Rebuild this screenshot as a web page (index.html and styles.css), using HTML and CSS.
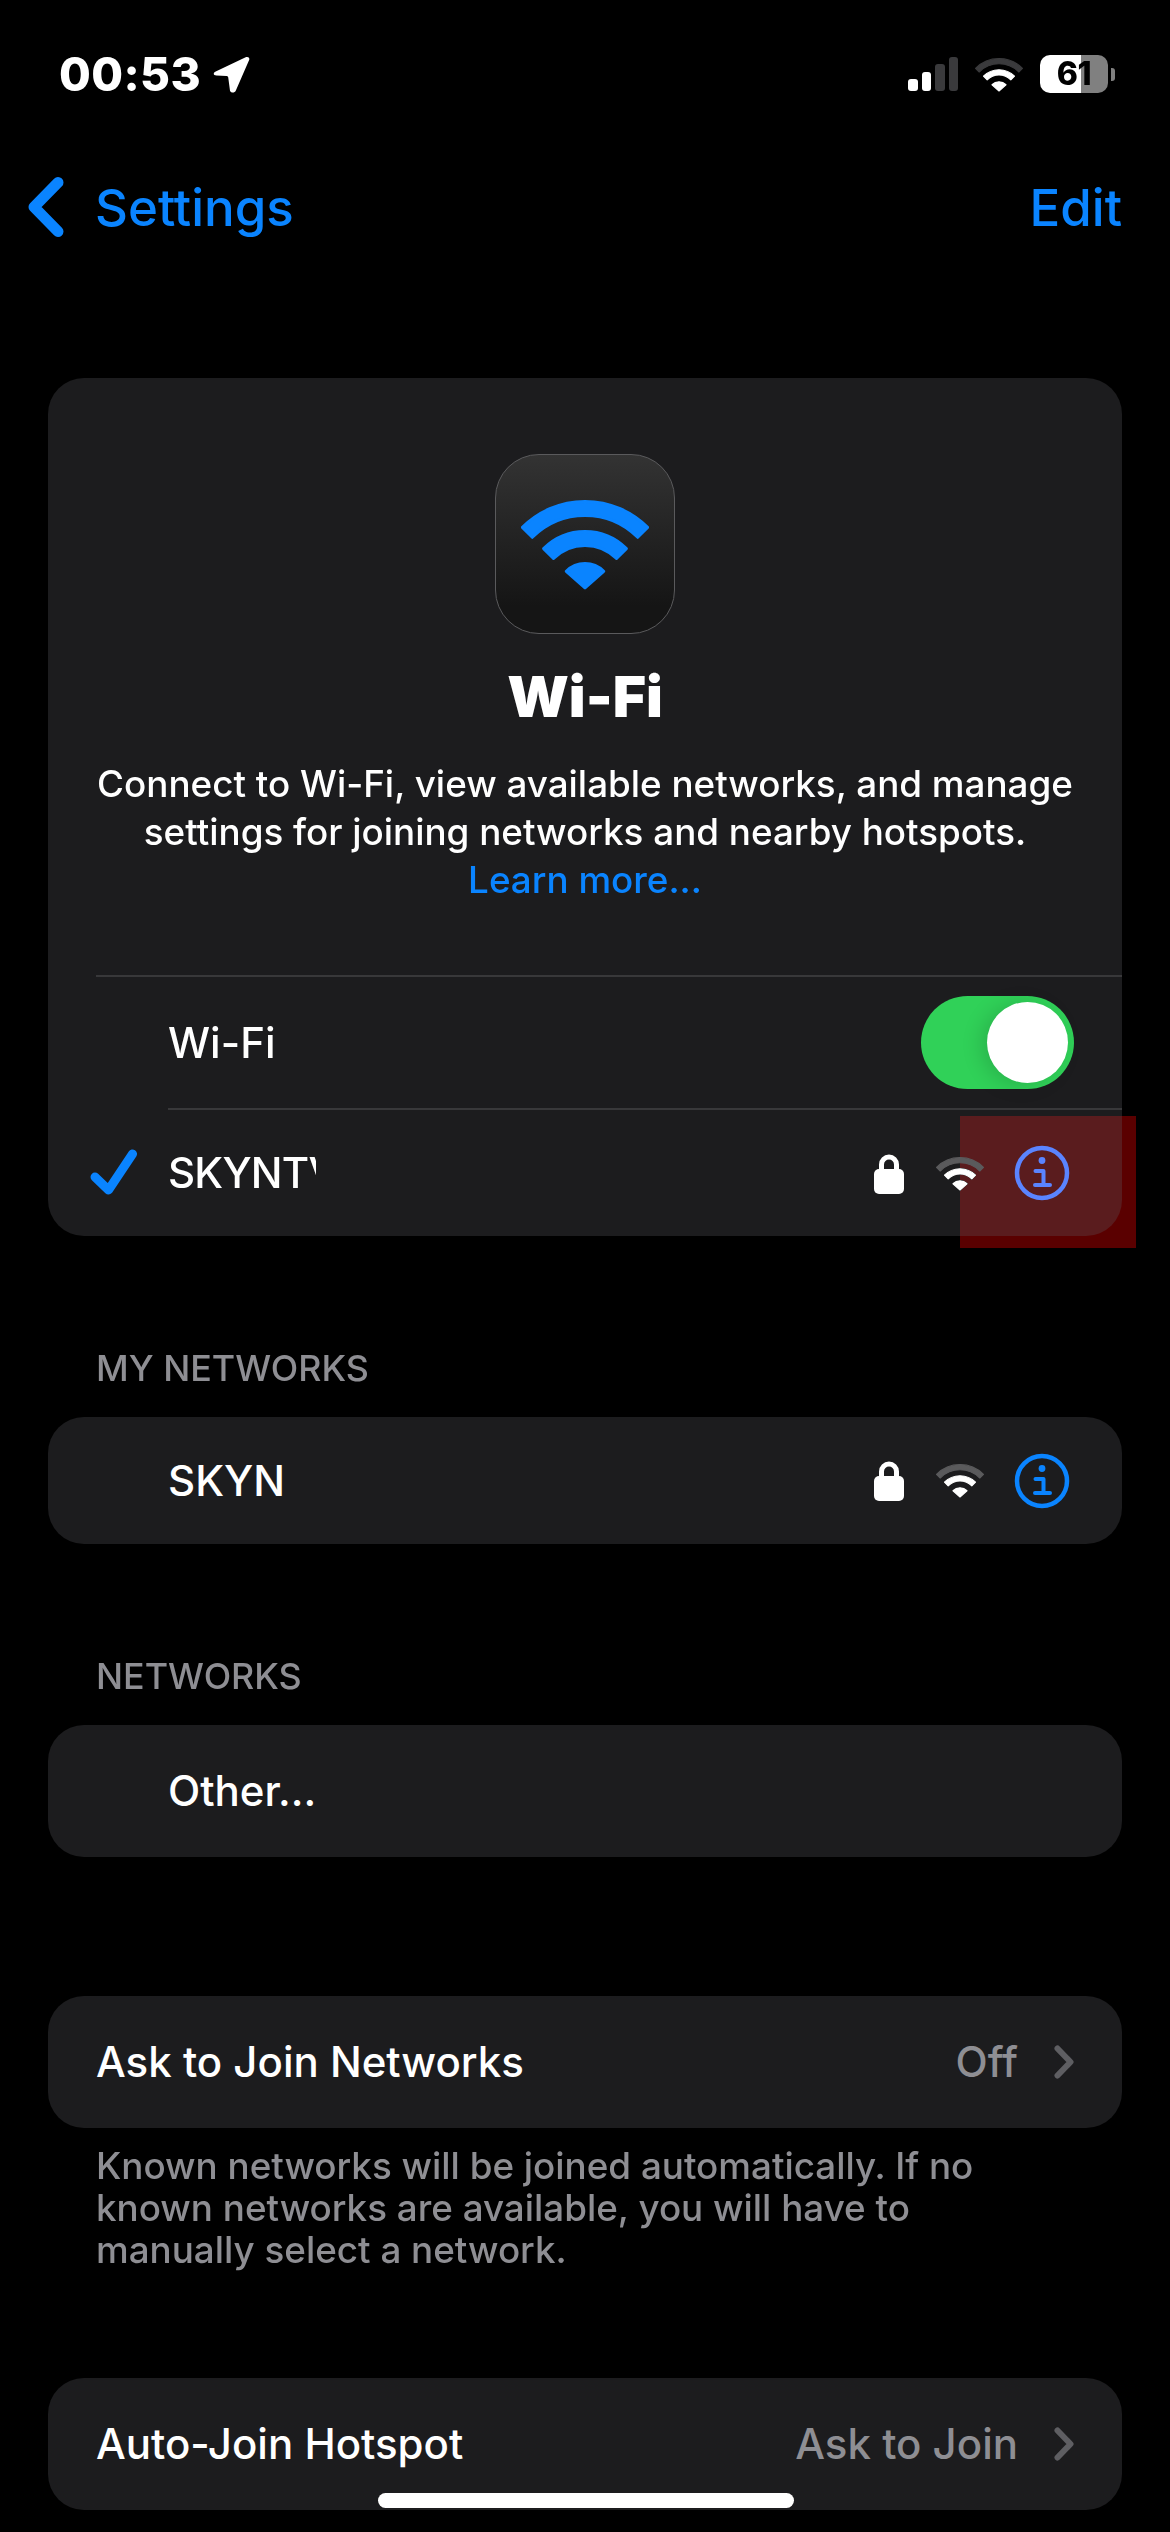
FILE: index.html
```html
<!DOCTYPE html>
<html lang="en">
<head>
<meta charset="utf-8">
<title>Wi-Fi</title>
<link rel="stylesheet" href="styles.css">
</head>
<body>
<svg class="defs" width="0" height="0" aria-hidden="true">
  <symbol id="wifi" viewBox="0 0 128 92">
    <path class="arc-outer" d="M1.4 29.4A88.5 88.5 0 0 1 126.6 29.4L116.7 39.3A74.5 74.5 0 0 0 11.3 39.3Z"/>
    <path d="M22.6 50.6A58.5 58.5 0 0 1 105.4 50.6L95.5 60.5A44.5 44.5 0 0 0 32.5 60.5Z"/>
    <path d="M45.3 73.3A26.5 26.5 0 0 1 82.7 73.3L64 90Z"/>
  </symbol>
  <symbol id="lock" viewBox="0 0 30 41">
    <path class="shackle" d="M7.5 20V11.5a7.5 7.5 0 0 1 15 0V20"/>
    <rect y="16" width="30" height="25" rx="5"/>
  </symbol>
  <symbol id="info" viewBox="0 0 56 56">
    <circle class="info-ring" cx="28" cy="28" r="25"/>
    <circle class="info-dot" cx="28" cy="15.5" r="3.4"/>
    <path class="info-i" d="M21.5 26H29.5V40M21 40H36"/>
  </symbol>
  <symbol id="chev" viewBox="0 0 20 34">
    <path d="M3.5 3.5L16.5 17L3.5 30.5"/>
  </symbol>
</svg>

<header class="status">
  <div class="status-left">
    <span class="time">00:53</span>
    <svg class="loc" viewBox="0 0 34 37" preserveAspectRatio="none"><path d="M2.5 15.5L30 1.2C32.3 0.2 34 1.8 33.2 4L21 34.5C20 37.3 16.2 37.3 15.6 34.5L14 21.5C13.8 20.5 13.2 20 12.4 20L3.2 19.6C0.2 19.4 -0.2 17 2.5 15.5Z"/></svg>
  </div>
  <div class="status-right">
    <div class="bars">
      <span class="bar bar-1"></span><span class="bar bar-2"></span><span class="bar bar-3"></span><span class="bar bar-4"></span>
    </div>
    <svg class="wifi wifi-status"><use href="#wifi"/></svg>
    <div class="battery"><div class="battery-body"><span class="battery-num">61</span></div><span class="battery-nub"></span></div>
  </div>
</header>

<nav class="nav">
  <a class="back">
    <svg class="back-chev" viewBox="0 0 36 60"><path d="M30 5.500L6 30L30 54.500"/></svg>
    <span>Settings</span>
  </a>
  <a class="edit">Edit</a>
</nav>

<main class="main">
  <section class="card card-wifi">
    <div class="intro">
      <div class="app-icon"><svg class="wifi wifi-big"><use href="#wifi"/></svg></div>
      <h1 class="title">Wi-Fi</h1>
      <p class="desc">Connect to Wi-Fi, view available networks, and manage settings for joining networks and nearby hotspots.<br><a class="link">Learn more...</a></p>
    </div>
    <div class="row row-toggle">
      <div class="lead"></div>
      <div class="body"><span class="label">Wi-Fi</span><div class="toggle"><span class="knob"></span></div></div>
    </div>
    <div class="row row-current">
      <div class="lead"><svg class="check" viewBox="0 0 48 46"><path d="M5 28L18.500 41L42.500 5"/></svg></div>
      <div class="body body-line">
        <span class="label label-clip">SKYNTV</span>
        <div class="trail">
          <svg class="lock"><use href="#lock"/></svg>
          <svg class="wifi wifi-small"><use href="#wifi"/></svg>
          <svg class="info"><use href="#info"/></svg>
        </div>
      </div>
    </div>
    <div class="touch"></div>
  </section>

  <h2 class="sec">MY NETWORKS</h2>
  <section class="card">
    <div class="row row-net">
      <div class="lead"></div>
      <div class="body">
        <span class="label">SKYN</span>
        <div class="trail">
          <svg class="lock"><use href="#lock"/></svg>
          <svg class="wifi wifi-small"><use href="#wifi"/></svg>
          <svg class="info"><use href="#info"/></svg>
        </div>
      </div>
    </div>
  </section>

  <h2 class="sec">NETWORKS</h2>
  <section class="card">
    <div class="row row-other">
      <div class="lead"></div>
      <div class="body"><span class="label">Other...</span></div>
    </div>
  </section>

  <section class="card card-ask">
    <div class="pref"><span class="label label-strong">Ask to Join Networks</span><span class="value">Off</span><svg class="chev"><use href="#chev"/></svg></div>
  </section>
  <p class="foot">Known networks will be joined automatically. If no known networks are available, you will have to manually select a network.</p>

  <section class="card card-auto">
    <div class="pref"><span class="label label-strong">Auto-Join Hotspot</span><span class="value">Ask to Join</span><svg class="chev"><use href="#chev"/></svg></div>
  </section>
</main>
<div class="home"></div>
</body>
</html>
```

FILE: styles.css
```css
* { box-sizing: border-box; margin: 0; padding: 0; }
html, body { background: #000; }
body {
  width: 1170px;
  height: 2532px;
  overflow: hidden;
  position: relative;
  font-family: Inter, "Noto Sans", sans-serif;
  color: #fff;
}
.defs { position: absolute; }

/* status bar */
.status { height: 148px; display: flex; justify-content: space-between; align-items: center; padding: 0 55px 0 59px; }
.status-left { display: flex; align-items: center; gap: 12px; }
.time { font-size: 46px; font-weight: 800; line-height: 54px; letter-spacing: 0.4px; }
.loc { width: 37px; height: 37px; fill: #fff; }
.status-right { display: flex; align-items: center; }
.bars { display: flex; align-items: flex-end; gap: 4px; height: 34px; margin-right: 17px; }
.bar { width: 9.500px; border-radius: 3px; background: #3a3a3c; }
.bar-1 { height: 12px; background: #fff; }
.bar-2 { height: 19px; background: #fff; }
.bar-3 { height: 27px; }
.bar-4 { height: 34px; }
.wifi { fill: #fff; stroke: #fff; stroke-width: 3; stroke-linejoin: round; display: block; }
.wifi-status { width: 48px; height: 35px; margin-right: 17px; --arc: #3a3a3c; }
.arc-outer { fill: var(--arc, currentColor); stroke: var(--arc, currentColor); }
.battery { display: flex; align-items: center; gap: 3px; }
.battery-body {
  width: 68px; height: 38px; border-radius: 10px;
  background: linear-gradient(90deg, #fff 0 60%, #808080 60% 100%);
  display: flex; align-items: center; justify-content: center;
}
.battery-num { color: #000; font-size: 32px; font-weight: 800; line-height: 38px; letter-spacing: -0.5px; }
.battery-nub { width: 4px; height: 13px; border-radius: 0 3px 3px 0; background: #808080; }

/* nav */
.nav { height: 118px; display: flex; justify-content: space-between; align-items: center; padding: 0 48px 0 28px; color: #0a84ff; font-size: 51px; font-weight: 500; }
.back { display: flex; align-items: center; gap: 31px; }
.back-chev { width: 36px; height: 60px; fill: none; stroke: #0a84ff; stroke-width: 11; stroke-linecap: round; stroke-linejoin: round; }

/* cards */
.main { padding: 112px 48px 0; }
.card { background: #1c1c1e; border-radius: 36px; position: relative; }
.card-wifi { height: 858px; }
.intro {
  margin-left: 48px; padding: 76px 48px 0 0; height: 599px;
  border-bottom: 2px solid #38383a;
  display: flex; flex-direction: column; align-items: center; text-align: center;
}
.app-icon {
  width: 180px; height: 180px; border-radius: 44px;
  background: linear-gradient(180deg, #333 0%, #151515 85%);
  border: 1.500px solid #5a5a5c;
  display: flex; align-items: center; justify-content: center;
}
.wifi-big { width: 128px; height: 92px; fill: #0a84ff; stroke: #0a84ff; --arc: #0a84ff; }
.title { font-size: 57px; font-weight: 900; line-height: 72px; margin-top: 27px; }
.desc { font-size: 36.800px; font-weight: 500; line-height: 48px; margin-top: 27px; width: 990px; }
.link { color: #0a84ff; }

.row { display: flex; }
.lead { width: 78px; flex: none; margin-left: 42px; display: flex; align-items: center; }
.body { flex: 1; display: flex; align-items: center; justify-content: space-between; padding-right: 48px; min-width: 0; }
.row-toggle { height: 131px; }
.row-current { height: 128px; }
.body-line { border-top: 2px solid #38383a; padding-right: 52px; }
.row-net { height: 127px; }
.row-net .body { padding-right: 52px; }
.row-other { height: 132px; }

.label { font-size: 42px; font-weight: 500; line-height: 50px; white-space: nowrap; }
.label-clip { width: 148px; overflow: hidden; letter-spacing: -0.8px; }
.label-strong { flex: 1; font-weight: 550; }
.toggle {
  width: 153px; height: 93px; border-radius: 47px; background: #30d158;
  display: flex; align-items: center; justify-content: flex-end; padding-right: 6px;
}
.knob { width: 81px; height: 81px; border-radius: 50%; background: #fff; box-shadow: -6px 2px 20px rgba(0, 0, 0, 0.15); }
.trail { display: flex; align-items: center; }
.lock { width: 30px; height: 41px; fill: #fff; margin-right: 32px; }
.shackle { fill: none; stroke: #fff; stroke-width: 5; }
.wifi-small { width: 48px; height: 35px; margin-right: 30px; --arc: #5a5a5c; }
.info { width: 56px; height: 56px; }
.info-ring { fill: none; stroke: #0a84ff; stroke-width: 4.500; }
.info-dot { fill: #0a84ff; }
.info-i { fill: none; stroke: #0a84ff; stroke-width: 4; stroke-linecap: round; stroke-linejoin: round; }
.check { width: 48px; height: 46px; fill: none; stroke: #0a84ff; stroke-width: 9; stroke-linecap: round; stroke-linejoin: round; }

/* debug-touch highlight lying over the row */
.touch { position: absolute; right: -14px; bottom: -12px; width: 176px; height: 132px; background: #5a0000; mix-blend-mode: lighten; }

.sec { font-size: 35.800px; font-weight: 550; line-height: 44px; color: #8e8e93; margin: 110px 0 27px 48px; }

.pref { height: 132px; display: flex; align-items: center; padding: 0 48px; }
.value { font-size: 42px; font-weight: 500; color: #8e8e93; line-height: 50px; margin-right: 36px; }
.chev { width: 20px; height: 34px; fill: none; stroke: #5e5e62; stroke-width: 6; stroke-linecap: round; stroke-linejoin: round; }
.card-ask { margin-top: 139px; }
.foot { font-size: 36.800px; font-weight: 500; line-height: 42px; color: #8e8e93; margin: 17px 0 0 48px; max-width: 940px; }
.card-auto { margin-top: 107px; }

.home { position: absolute; left: 378px; bottom: 24px; width: 416px; height: 15px; border-radius: 8px; background: #fff; }
```
